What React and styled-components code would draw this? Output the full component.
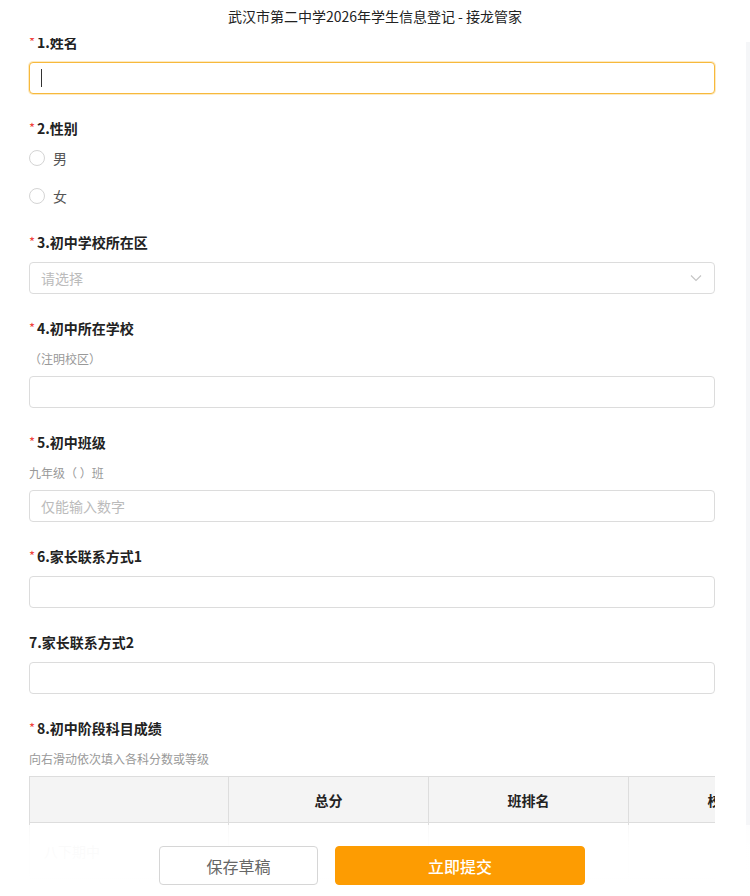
import React from "react";
import styled, { createGlobalStyle } from "styled-components";

const Global = createGlobalStyle`
  html, body { margin: 0; padding: 0; background: #fff; }
  body { font-family: "Noto Sans CJK SC", "Noto Sans", sans-serif; color: #333; }
  * { box-sizing: border-box; }
`;

const Page = styled.div`
  position: relative;
  width: 750px;
  height: 896px;
  overflow: hidden;
  background: #fff;
  display: flex;
  flex-direction: column;
`;

const Header = styled.header`
  height: 38px;
  flex: none;
  display: flex;
  align-items: flex-start;
  justify-content: center;
  padding-top: 6px;
  line-height: 20px;
  font-size: 14px;
  color: #222;
  background: #fff;
  position: relative;
  z-index: 2;
`;

const Viewport = styled.div`
  flex: 1;
  overflow: hidden;
  display: flex;
`;

const Form = styled.main`
  flex: 1;
  margin-top: -6px;
  padding: 0 31px 0 29px;
`;

const ScrollTrack = styled.div`
  width: 4px;
  flex: none;
  margin-top: 4px;
  background: #f5f6f8;
`;

const Field = styled.section`
  margin-bottom: ${(p) => (p.$tight ? "21px" : "24px")};
`;

const Label = styled.div`
  display: flex;
  align-items: center;
  height: 20px;
  line-height: 20px;
  font-size: 14px;
  font-weight: 700;
  color: #222;
  margin-bottom: ${(p) => (p.$withHint ? "12px" : "10px")};
`;

const Star = styled.span`
  color: #f0433d;
  font-weight: 400;
  font-size: 13px;
  width: 8px;
`;

const Hint = styled.div`
  font-size: 12px;
  line-height: 18px;
  color: #999;
  margin-bottom: 8px;
`;

const Input = styled.div`
  height: 32px;
  border: 1px solid ${(p) => (p.$focus ? "#f7b93c" : "#dcdcdc")};
  box-shadow: ${(p) => (p.$focus ? "0 0 0 1px rgba(250, 196, 80, 0.35)" : "none")};
  border-radius: 4px;
  display: flex;
  align-items: center;
  padding: 0 11px;
  font-size: 14px;
  color: #bbb;
  background: #fff;
`;

const Caret = styled.span`
  width: 1px;
  height: 18px;
  background: #333;
`;

const SelectBox = styled(Input)`
  justify-content: space-between;
  padding-right: 12px;
`;

const RadioGroup = styled.div`
  display: flex;
  flex-direction: column;
  gap: 8px;
  margin-top: -5px;
`;

const RadioRow = styled.label`
  height: 30px;
  display: flex;
  align-items: center;
  gap: 8px;
  font-size: 14px;
  color: #555;
`;

const RadioCircle = styled.span`
  width: 16px;
  height: 16px;
  border-radius: 50%;
  border: 1px solid #d4d4d4;
  background: #fff;
`;

const TableWrap = styled.div`
  overflow: hidden;
  width: 686px;
`;

const Table = styled.div`
  display: grid;
  grid-template-columns: 199px 200px 200px 200px;
  width: 799px;
  border-left: 1px solid #ddd;
`;

const HeadCell = styled.div`
  height: 47px;
  background: #f4f4f4;
  border-top: 1px solid #ddd;
  border-bottom: 1px solid #ddd;
  border-right: 1px solid #ddd;
  display: flex;
  align-items: center;
  justify-content: center;
  font-size: 14px;
  font-weight: 700;
  color: #222;
`;

const BodyCell = styled.div`
  height: 56px;
  border-right: 1px solid #ddd;
  border-bottom: 1px solid #ddd;
  display: flex;
  align-items: center;
  padding-left: 14px;
  font-size: 14px;
  color: #666;
`;

const Footer = styled.footer`
  position: absolute;
  left: 0;
  right: 0;
  bottom: 0;
  height: 71px;
  display: flex;
  justify-content: center;
  align-items: flex-start;
  gap: 17px;
  padding-top: 21px;
  padding-right: 6px;
  background: linear-gradient(rgba(255, 255, 255, 0.82), rgba(255, 255, 255, 0.97) 30%, #fff);
  z-index: 3;
`;

const Button = styled.button`
  height: 39px;
  width: ${(p) => (p.$primary ? "250px" : "159px")};
  border-radius: 4px;
  border: 1px solid ${(p) => (p.$primary ? "#fd9c02" : "#d6d6d6")};
  background: ${(p) => (p.$primary ? "#fd9c02" : "#fff")};
  color: ${(p) => (p.$primary ? "#fff" : "#666")};
  font-family: inherit;
  font-size: 16px;
  font-weight: ${(p) => (p.$primary ? 500 : 400)};
  display: flex;
  align-items: center;
  justify-content: center;
  padding: 0;
`;

const Chevron = () => (
  <svg width="12" height="8" viewBox="0 0 12 8" fill="none">
    <path d="M1 1.5 L6 6.5 L11 1.5" stroke="#c4c4c4" strokeWidth="1.1" />
  </svg>
);

const Q = ({ n, text, req = true, hint }) => (
  <Label $withHint={!!hint}>
    {req && <Star>*</Star>}
    {n}.{text}
  </Label>
);

export default function App() {
  return (
    <Page>
      <Global />
      <Header>武汉市第二中学2026年学生信息登记 - 接龙管家</Header>
      <Viewport>
        <Form>
          <Field>
            <Q n={1} text="姓名" />
            <Input $focus>
              <Caret />
            </Input>
          </Field>

          <Field $tight>
            <Q n={2} text="性别" />
            <RadioGroup>
              <RadioRow>
                <RadioCircle />男
              </RadioRow>
              <RadioRow>
                <RadioCircle />女
              </RadioRow>
            </RadioGroup>
          </Field>

          <Field>
            <Q n={3} text="初中学校所在区" />
            <SelectBox>
              请选择
              <Chevron />
            </SelectBox>
          </Field>

          <Field>
            <Q n={4} text="初中所在学校" hint />
            <Hint>（注明校区）</Hint>
            <Input />
          </Field>

          <Field>
            <Q n={5} text="初中班级" hint />
            <Hint>九年级（ ）班</Hint>
            <Input>仅能输入数字</Input>
          </Field>

          <Field>
            <Q n={6} text="家长联系方式1" />
            <Input />
          </Field>

          <Field>
            <Q n={7} text="家长联系方式2" req={false} />
            <Input />
          </Field>

          <Field>
            <Q n={8} text="初中阶段科目成绩" hint />
            <Hint>向右滑动依次填入各科分数或等级</Hint>
            <TableWrap>
              <Table>
                <HeadCell />
                <HeadCell>总分</HeadCell>
                <HeadCell>班排名</HeadCell>
                <HeadCell>校排名</HeadCell>
                <BodyCell>八下期中</BodyCell>
                <BodyCell />
                <BodyCell />
                <BodyCell />
              </Table>
            </TableWrap>
          </Field>
        </Form>
        <ScrollTrack />
      </Viewport>
      <Footer>
        <Button>保存草稿</Button>
        <Button $primary>立即提交</Button>
      </Footer>
    </Page>
  );
}
